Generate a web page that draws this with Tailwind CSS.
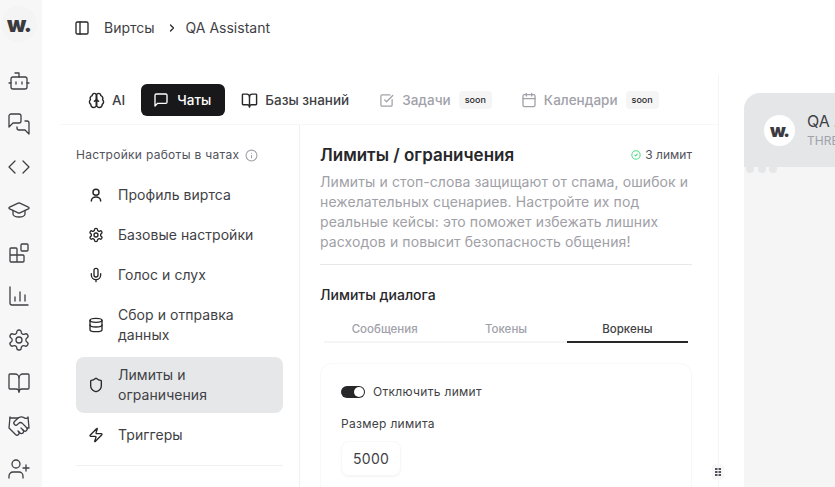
<!DOCTYPE html>
<html lang="ru">
<head>
<meta charset="utf-8">
<script src="https://cdn.jsdelivr.net/npm/@tailwindcss/browser@4"></script>
<title>QA Assistant</title>
</head>
<body class="bg-white">
<div class="flex h-[487px] w-[835px] overflow-hidden font-['Inter',sans-serif] text-[#18181b]">
  <!-- icon rail -->
  <aside class="flex w-[42px] shrink-0 flex-col items-center bg-[#f7f7f7] pr-1 text-[#3f3f46]">
    <div class="mt-[6px] flex size-9 items-center justify-center rounded-full bg-[#f4f4f4] text-[22px] font-black leading-none tracking-[-1px] text-[#3a3a3f]">w.</div>
    <div class="mt-[27px] flex flex-col items-center gap-[19.1px]">
      <svg class="size-6" viewBox="0 0 24 24" fill="none" stroke="currentColor" stroke-width="1.3" stroke-linecap="round" stroke-linejoin="round"><path d="M12 8V4H8"/><rect x="4" y="8" width="16" height="12" rx="2"/><path d="M2 14h2M20 14h2M15 13v2M9 13v2"/></svg>
      <svg class="size-6" viewBox="0 0 24 24" fill="none" stroke="currentColor" stroke-width="1.3" stroke-linecap="round" stroke-linejoin="round"><path d="M14 9a2 2 0 0 1-2 2H6l-4 4V4a2 2 0 0 1 2-2h8a2 2 0 0 1 2 2z"/><path d="M18 9h2a2 2 0 0 1 2 2v11l-4-4h-6a2 2 0 0 1-2-2v-1"/></svg>
      <svg class="size-6" viewBox="0 0 24 24" fill="none" stroke="currentColor" stroke-width="1.3" stroke-linecap="round" stroke-linejoin="round"><path d="m16 18 6-6-6-6"/><path d="m8 6-6 6 6 6"/></svg>
      <svg class="size-6" viewBox="0 0 24 24" fill="none" stroke="currentColor" stroke-width="1.3" stroke-linecap="round" stroke-linejoin="round"><path d="M21.42 10.922a1 1 0 0 0-.019-1.838L12.83 5.18a2 2 0 0 0-1.66 0L2.6 9.08a1 1 0 0 0 0 1.832l8.57 3.908a2 2 0 0 0 1.66 0z"/><path d="M6 12.5V16a6 3 0 0 0 12 0v-3.5"/></svg>
      <svg class="size-6" viewBox="0 0 24 24" fill="none" stroke="currentColor" stroke-width="1.3" stroke-linecap="round" stroke-linejoin="round"><rect x="14" y="3" width="7" height="7" rx="1"/><path d="M10 21V8a1 1 0 0 0-1-1H4a1 1 0 0 0-1 1v12a1 1 0 0 0 1 1h12a1 1 0 0 0 1-1v-5a1 1 0 0 0-1-1H3"/></svg>
      <svg class="size-6" viewBox="0 0 24 24" fill="none" stroke="currentColor" stroke-width="1.3" stroke-linecap="round" stroke-linejoin="round"><path d="M3 3v16a2 2 0 0 0 2 2h16"/><path d="M8 17v-4M13 17V8M18 17v-6"/></svg>
      <svg class="size-6" viewBox="0 0 24 24" fill="none" stroke="currentColor" stroke-width="1.3" stroke-linecap="round" stroke-linejoin="round"><path d="M12.22 2h-.44a2 2 0 0 0-2 2v.18a2 2 0 0 1-1 1.73l-.43.25a2 2 0 0 1-2 0l-.15-.08a2 2 0 0 0-2.73.73l-.22.38a2 2 0 0 0 .73 2.73l.15.1a2 2 0 0 1 1 1.72v.51a2 2 0 0 1-1 1.74l-.15.09a2 2 0 0 0-.73 2.73l.22.38a2 2 0 0 0 2.73.73l.15-.08a2 2 0 0 1 2 0l.43.25a2 2 0 0 1 1 1.73V20a2 2 0 0 0 2 2h.44a2 2 0 0 0 2-2v-.18a2 2 0 0 1 1-1.73l.43-.25a2 2 0 0 1 2 0l.15.08a2 2 0 0 0 2.73-.73l.22-.39a2 2 0 0 0-.73-2.73l-.15-.08a2 2 0 0 1-1-1.74v-.5a2 2 0 0 1 1-1.74l.15-.09a2 2 0 0 0 .73-2.73l-.22-.38a2 2 0 0 0-2.73-.73l-.15.08a2 2 0 0 1-2 0l-.43-.25a2 2 0 0 1-1-1.73V4a2 2 0 0 0-2-2z"/><circle cx="12" cy="12" r="3"/></svg>
      <svg class="size-6" viewBox="0 0 24 24" fill="none" stroke="currentColor" stroke-width="1.3" stroke-linecap="round" stroke-linejoin="round"><path d="M12 7v14"/><path d="M3 18a1 1 0 0 1-1-1V4a1 1 0 0 1 1-1h5a4 4 0 0 1 4 4 4 4 0 0 1 4-4h5a1 1 0 0 1 1 1v13a1 1 0 0 1-1 1h-6a3 3 0 0 0-3 3 3 3 0 0 0-3-3z"/></svg>
      <svg class="size-6" viewBox="0 0 24 24" fill="none" stroke="currentColor" stroke-width="1.3" stroke-linecap="round" stroke-linejoin="round"><path d="m11 17 2 2a1 1 0 1 0 3-3"/><path d="m14 14 2.5 2.5a1 1 0 1 0 3-3l-3.88-3.88a3 3 0 0 0-4.24 0l-.88.88a1 1 0 1 1-3-3l2.81-2.81a5.79 5.79 0 0 1 7.06-.87l.47.28a2 2 0 0 0 1.42.25L21 4"/><path d="m21 3 1 11h-2"/><path d="M3 3 2 14l6.5 6.5a1 1 0 1 0 3-3"/><path d="M3 4h8"/></svg>
      <svg class="size-6" viewBox="0 0 24 24" fill="none" stroke="currentColor" stroke-width="1.3" stroke-linecap="round" stroke-linejoin="round"><path d="M16 21v-2a4 4 0 0 0-4-4H6a4 4 0 0 0-4 4v2"/><circle cx="9" cy="7" r="4"/><path d="M19 8v6M22 11h-6"/></svg>
    </div>
  </aside>

  <main class="flex min-w-0 flex-1 flex-col">
    <!-- breadcrumb -->
    <header class="flex h-14 shrink-0 items-center pl-[32px] text-sm text-[#3f3f46]">
      <svg class="size-[16px] text-[#27272a]" viewBox="0 0 24 24" fill="none" stroke="currentColor" stroke-width="2" stroke-linecap="round" stroke-linejoin="round"><rect x="3" y="3" width="18" height="18" rx="2"/><path d="M9 3v18"/></svg>
      <span class="ml-[14px]">Виртсы</span>
      <svg class="ml-[11px] size-[12px] text-[#27272a]" viewBox="0 0 24 24" fill="none" stroke="currentColor" stroke-width="2.5" stroke-linecap="round" stroke-linejoin="round"><path d="m9 18 6-6-6-6"/></svg>
      <span class="ml-[8px]">QA Assistant</span>
    </header>

    <div class="flex min-h-0 flex-1">
      <!-- settings -->
      <section class="flex w-[676px] shrink-0 flex-col">
        <nav class="ml-[34px] mt-[28px] flex h-8 shrink-0 items-center text-[13.5px] font-medium">
          <div class="flex items-center gap-[7px] pl-3 pr-[16px]">
            <svg class="size-[17px] text-[#27272a]" viewBox="0 0 24 24" fill="none" stroke="currentColor" stroke-width="2" stroke-linecap="round" stroke-linejoin="round"><path d="M12 5a3 3 0 1 0-5.997.125 4 4 0 0 0-2.526 5.77 4 4 0 0 0 .556 6.588A4 4 0 1 0 12 18Z"/><path d="M12 5a3 3 0 1 1 5.997.125 4 4 0 0 1 2.526 5.77 4 4 0 0 1-.556 6.588A4 4 0 1 1 12 18Z"/><path d="M12 5v13M15 13a4.5 4.5 0 0 1-3-4 4.5 4.5 0 0 1-3 4"/></svg>
            <span class="text-[#3f3f46]">AI</span>
          </div>
          <div class="flex h-8 w-[84px] items-center gap-2 rounded-md bg-[#18181b] px-3 text-white">
            <svg class="size-[16px]" viewBox="0 0 24 24" fill="none" stroke="currentColor" stroke-width="2" stroke-linecap="round" stroke-linejoin="round"><path d="M21 15a2 2 0 0 1-2 2H7l-4 4V5a2 2 0 0 1 2-2h14a2 2 0 0 1 2 2z"/></svg>
            <span>Чаты</span>
          </div>
          <div class="ml-[16px] flex items-center gap-[7px] text-[#3f3f46]">
            <svg class="size-[17px] text-[#27272a]" viewBox="0 0 24 24" fill="none" stroke="currentColor" stroke-width="2" stroke-linecap="round" stroke-linejoin="round"><path d="M12 7v14"/><path d="M3 18a1 1 0 0 1-1-1V4a1 1 0 0 1 1-1h5a4 4 0 0 1 4 4 4 4 0 0 1 4-4h5a1 1 0 0 1 1 1v13a1 1 0 0 1-1 1h-6a3 3 0 0 0-3 3 3 3 0 0 0-3-3z"/></svg>
            <span>Базы знаний</span>
          </div>
          <div class="ml-[30px] flex items-center gap-[8px] text-[#a1a1aa]">
            <svg class="size-[15px]" viewBox="0 0 24 24" fill="none" stroke="currentColor" stroke-width="2" stroke-linecap="round" stroke-linejoin="round"><path d="M21 10.5V19a2 2 0 0 1-2 2H5a2 2 0 0 1-2-2V5a2 2 0 0 1 2-2h12.5"/><path d="m9 11 3 3L22 4"/></svg>
            <span>Задачи</span>
            <span class="rounded bg-[#f5f5f5] px-[6px] py-[2px] text-[9px] font-medium leading-[14px] text-[#27272a]">soon</span>
          </div>
          <div class="ml-[29px] flex items-center gap-[7px] text-[#a1a1aa]">
            <svg class="size-[16px]" viewBox="0 0 24 24" fill="none" stroke="currentColor" stroke-width="2" stroke-linecap="round" stroke-linejoin="round"><path d="M8 2v4M16 2v4"/><rect x="3" y="4" width="18" height="18" rx="2"/><path d="M3 10h18"/></svg>
            <span>Календари</span>
            <span class="ml-px rounded bg-[#f5f5f5] px-[6px] py-[2px] text-[9px] font-medium leading-[14px] text-[#27272a]">soon</span>
          </div>
        </nav>

        <div class="ml-[18px] mt-[8px] flex min-h-0 flex-1 border-t border-[#f7f7f7]">
          <!-- sub menu -->
          <div class="w-[240px] shrink-0 border-r border-[#f0f0f1] pl-[16px] pr-[16px] pt-[23px]">
            <div class="flex h-[14px] items-center gap-[6px] text-xs tracking-[0.3px] text-[#52525b]">
              Настройки работы в чатах
              <svg class="size-[13px] text-[#a1a1aa]" viewBox="0 0 24 24" fill="none" stroke="currentColor" stroke-width="2" stroke-linecap="round" stroke-linejoin="round"><circle cx="12" cy="12" r="10"/><path d="M12 16v-4M12 8h.01"/></svg>
            </div>
            <ul class="mt-[15px] flex flex-col gap-1 text-sm leading-5 tracking-[0.05px] text-[#3f3f46]">
              <li class="flex items-center gap-[14px] rounded-lg py-2 pl-3 pr-3">
                <svg class="size-[16px] shrink-0 text-[#27272a]" viewBox="0 0 24 24" fill="none" stroke="currentColor" stroke-width="2.2" stroke-linecap="round" stroke-linejoin="round"><circle cx="12" cy="8" r="4.5"/><path d="M19 21a7 6 0 0 0-14 0"/></svg>
                <span>Профиль виртса</span>
              </li>
              <li class="flex items-center gap-[14px] rounded-lg py-2 pl-3 pr-3">
                <svg class="size-[16px] shrink-0 text-[#27272a]" viewBox="0 0 24 24" fill="none" stroke="currentColor" stroke-width="2" stroke-linecap="round" stroke-linejoin="round"><path d="M12.22 2h-.44a2 2 0 0 0-2 2v.18a2 2 0 0 1-1 1.73l-.43.25a2 2 0 0 1-2 0l-.15-.08a2 2 0 0 0-2.73.73l-.22.38a2 2 0 0 0 .73 2.73l.15.1a2 2 0 0 1 1 1.72v.51a2 2 0 0 1-1 1.74l-.15.09a2 2 0 0 0-.73 2.73l.22.38a2 2 0 0 0 2.73.73l.15-.08a2 2 0 0 1 2 0l.43.25a2 2 0 0 1 1 1.73V20a2 2 0 0 0 2 2h.44a2 2 0 0 0 2-2v-.18a2 2 0 0 1 1-1.73l.43-.25a2 2 0 0 1 2 0l.15.08a2 2 0 0 0 2.73-.73l.22-.39a2 2 0 0 0-.73-2.73l-.15-.08a2 2 0 0 1-1-1.74v-.5a2 2 0 0 1 1-1.74l.15-.09a2 2 0 0 0 .73-2.73l-.22-.38a2 2 0 0 0-2.73-.73l-.15.08a2 2 0 0 1-2 0l-.43-.25a2 2 0 0 1-1-1.73V4a2 2 0 0 0-2-2z"/><circle cx="12" cy="12" r="3"/></svg>
                <span>Базовые настройки</span>
              </li>
              <li class="flex items-center gap-[14px] rounded-lg py-2 pl-3 pr-3">
                <svg class="size-[16px] shrink-0 text-[#27272a]" viewBox="0 0 24 24" fill="none" stroke="currentColor" stroke-width="2" stroke-linecap="round" stroke-linejoin="round"><path d="M12 2a3 3 0 0 0-3 3v7a3 3 0 0 0 6 0V5a3 3 0 0 0-3-3Z"/><path d="M19 10v2a7 7 0 0 1-14 0v-2"/><path d="M12 19v3"/></svg>
                <span>Голос и слух</span>
              </li>
              <li class="flex items-center gap-[14px] rounded-lg py-2 pl-3 pr-3">
                <svg class="size-[16px] shrink-0 text-[#27272a]" viewBox="0 0 24 24" fill="none" stroke="currentColor" stroke-width="2" stroke-linecap="round" stroke-linejoin="round"><ellipse cx="12" cy="5" rx="9" ry="3"/><path d="M3 5v14a9 3 0 0 0 18 0V5"/><path d="M3 12a9 3 0 0 0 18 0"/></svg>
                <span>Сбор и отправка данных</span>
              </li>
              <li class="flex items-center gap-[14px] rounded-lg bg-[#e6e7e9] py-2 pl-3 pr-3">
                <svg class="size-[16px] shrink-0 text-[#27272a]" viewBox="0 0 24 24" fill="none" stroke="currentColor" stroke-width="2" stroke-linecap="round" stroke-linejoin="round"><path d="M20 13c0 5-3.5 7.5-7.66 8.95a1 1 0 0 1-.67-.01C7.5 20.5 4 18 4 13V6a1 1 0 0 1 1-1c2 0 4.5-1.2 6.24-2.72a1.17 1.17 0 0 1 1.52 0C14.51 3.81 17 5 19 5a1 1 0 0 1 1 1z"/></svg>
                <span>Лимиты и<br>ограничения</span>
              </li>
              <li class="flex items-center gap-[14px] rounded-lg py-2 pl-3 pr-3">
                <svg class="size-[16px] shrink-0 text-[#27272a]" viewBox="0 0 24 24" fill="none" stroke="currentColor" stroke-width="2" stroke-linecap="round" stroke-linejoin="round"><path d="M4 14a1 1 0 0 1-.78-1.63l9.9-10.2a.5.5 0 0 1 .86.46l-1.92 6.02A1 1 0 0 0 13 10h7a1 1 0 0 1 .78 1.63l-9.9 10.2a.5.5 0 0 1-.86-.46l1.92-6.02A1 1 0 0 0 11 14z"/></svg>
                <span>Триггеры</span>
              </li>
            </ul>
            <hr class="mt-3 border-[#f0f0f1]">
          </div>

          <!-- limits panel -->
          <div class="w-[393px] shrink-0 pl-[20px] pt-[18px]">
            <div class="w-[372px]">
              <div class="flex items-center justify-between">
                <h1 class="text-[17px] font-semibold leading-6 text-[#27272a]">Лимиты / ограничения</h1>
                <div class="flex items-center gap-1 text-xs text-[#52525b]">
                  <svg class="size-[10px] text-[#4ade80]" viewBox="0 0 24 24" fill="none" stroke="currentColor" stroke-width="2.5" stroke-linecap="round" stroke-linejoin="round"><circle cx="12" cy="12" r="10"/><path d="m9 12 2 2 4-4"/></svg>
                  3 лимит
                </div>
              </div>
              <p class="mt-[5px] border-b border-[#e8e8e9] pb-[12px] text-sm leading-5 tracking-[0.1px] text-[#a0a0a6]">Лимиты и стоп-слова защищают от спама, ошибок и нежелательных сценариев. Настройте их под реальные кейсы: это поможет избежать лишних расходов и повысит безопасность общения!</p>
              <h2 class="mt-[20px] text-sm font-medium leading-5 text-[#27272a]">Лимиты диалога</h2>
              <div class="mx-[4px] mt-[16px] grid grid-cols-3 border-b-2 border-[#f5f5f5] text-center text-[11.5px] font-medium leading-4">
                <div class="-mb-[2px] h-[22px] text-[#a1a1aa]">Сообщения</div>
                <div class="-mb-[2px] h-[22px] text-[#a1a1aa]">Токены</div>
                <div class="-mb-[2px] h-[22px] border-b-2 border-[#27272a] text-[#3f3f46]">Воркены</div>
              </div>
              <div class="mt-[20px] h-[200px] rounded-xl border border-[#f8f8f8] px-[20px] pt-[20px]">
                <div class="flex items-center gap-2">
                  <div class="flex h-[12px] w-[24px] items-center justify-end rounded-full bg-[#27272a] pr-px">
                    <div class="size-[10px] rounded-full bg-white"></div>
                  </div>
                  <span class="text-xs leading-4 tracking-[0.3px] text-[#3f3f46]">Отключить лимит</span>
                </div>
                <div class="mt-[16px] text-xs leading-4 tracking-[0.3px] text-[#3f3f46]">Размер лимита</div>
                <div class="mt-[9px] flex h-[35px] w-[60px] items-center rounded-lg border border-[#f8f8f8] pl-[11px] text-sm tracking-[0.3px] text-[#3f3f46] shadow-xs">5000</div>
              </div>
            </div>
          </div>
        </div>
      </section>

      <!-- column divider with resize handle -->
      <div class="relative mt-[19px] w-px shrink-0 bg-[#f4f4f5]">
        <div class="absolute -left-[6px] top-[389px] flex h-4 w-3 items-center justify-center rounded bg-[#f7f7f7]">
          <svg class="size-[10px] text-[#52525b]" viewBox="0 0 10 10" fill="currentColor"><rect x="2" y="1" width="2.5" height="2"/><rect x="5.5" y="1" width="2.5" height="2"/><rect x="2" y="4" width="2.5" height="2"/><rect x="5.5" y="4" width="2.5" height="2"/><rect x="2" y="7" width="2.5" height="2"/><rect x="5.5" y="7" width="2.5" height="2"/></svg>
        </div>
      </div>

      <!-- chat preview -->
      <div class="ml-[25px] mt-[37px] w-[360px] shrink-0 overflow-hidden rounded-t-2xl bg-[#f5f5f5]">
        <div class="relative flex h-[74px] items-center gap-[12px] bg-[#e5e6e8] pl-[20px]">
          <div class="flex size-[31px] shrink-0 items-center justify-center rounded-full bg-white text-[18px] font-black tracking-[-1px] text-[#3a3a3f]">w.</div>
          <div class="whitespace-nowrap">
            <div class="text-base leading-5 text-[#3f3f46]">QA Assistant</div>
            <div class="mt-[2px] text-xs leading-4 text-[#a1a1aa]">THREAD</div>
          </div>
          <div class="absolute -bottom-[6px] left-[2px] flex gap-[3.5px]">
            <div class="size-[8px] rounded-full bg-[#e5e6e8]"></div>
            <div class="size-[8px] rounded-full bg-[#e5e6e8]"></div>
            <div class="size-[8px] rounded-full bg-[#e5e6e8]"></div>
          </div>
        </div>
      </div>
    </div>
  </main>
</div>
</body>
</html>
